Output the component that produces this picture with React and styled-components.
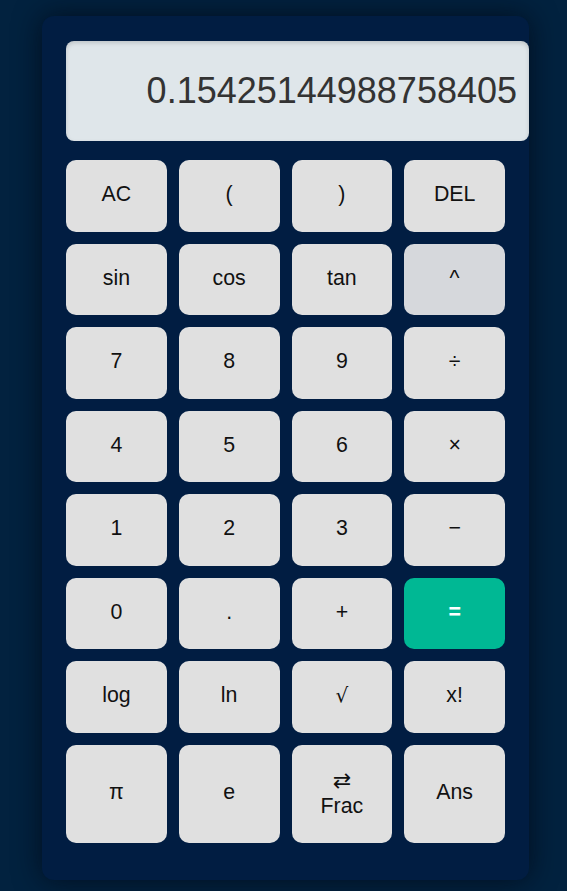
import React from "react";
import styled, { createGlobalStyle } from "styled-components";

const Global = createGlobalStyle`
  html, body { margin: 0; padding: 0; }
  body {
    background: #02223f;
    font-family: "Liberation Sans", Arial, sans-serif;
    min-height: 891px;
  }
  * { box-sizing: border-box; }
`;

const Page = styled.div`
  padding-top: 16px;
  display: flex;
  justify-content: center;
`;

const Calculator = styled.div`
  width: 487px;
  padding: 25px 24px 37px;
  background: #011d42;
  border-radius: 12px;
  box-shadow: 0 0 28px rgba(0, 8, 20, 0.75);
  margin-left: 4px;
`;

const Display = styled.div`
  box-sizing: content-box;
  width: 100%;
  height: 100px;
  padding: 0 12px;
  margin-bottom: 19px;
  background: #dfe6ea;
  border-radius: 8px;
  box-shadow: inset 0 2px 4px rgba(0, 0, 0, 0.15);
  display: flex;
  align-items: center;
  justify-content: flex-end;
  font-size: 36px;
  color: #333;
  overflow: hidden;
  white-space: nowrap;
`;

const Keys = styled.div`
  display: grid;
  grid-template-columns: repeat(4, 1fr);
  column-gap: 12px;
  row-gap: 12px;
`;

const Key = styled.button`
  border: none;
  border-radius: 10px;
  padding: 22px 0 25px;
  font-family: "Liberation Sans", Arial, sans-serif;
  font-size: 21.33px;
  line-height: 24.5px;
  color: ${(p) => (p.$accent ? "#ffffff" : "#111")};
  font-weight: ${(p) => (p.$accent ? 700 : 400)};
  background: ${(p) =>
    p.$accent ? "#00b894" : p.$hover ? "#d6d8dc" : "#e0e0e0"};
  display: flex;
  flex-direction: column;
  align-items: center;
  justify-content: center;
  cursor: pointer;
`;

const Small = styled.span`
  font-family: "DejaVu Sans", sans-serif;
  font-size: 22px;
  line-height: 27px;
`;

const Root = styled.span`
  font-family: "DejaVu Serif", serif;
  font-size: 20px;
`;

const rows = [
  ["AC", "(", ")", "DEL"],
  ["sin", "cos", "tan", "^"],
  ["7", "8", "9", "÷"],
  ["4", "5", "6", "×"],
  ["1", "2", "3", "−"],
  ["0", ".", "+", "="],
  ["log", "ln", "√", "x!"],
  ["π", "e", "frac", "Ans"],
];

export default function App() {
  return (
    <>
      <Global />
      <Page>
        <Calculator>
          <Display>0.15425144988758405</Display>
          <Keys>
            {rows.flat().map((k) => {
              if (k === "frac")
                return (
                  <Key key={k}>
                    <Small>⇄</Small>
                    <span>Frac</span>
                  </Key>
                );
              if (k === "√")
                return (
                  <Key key={k}>
                    <Root>√</Root>
                  </Key>
                );
              return (
                <Key key={k} $accent={k === "="} $hover={k === "^"}>
                  {k}
                </Key>
              );
            })}
          </Keys>
        </Calculator>
      </Page>
    </>
  );
}
